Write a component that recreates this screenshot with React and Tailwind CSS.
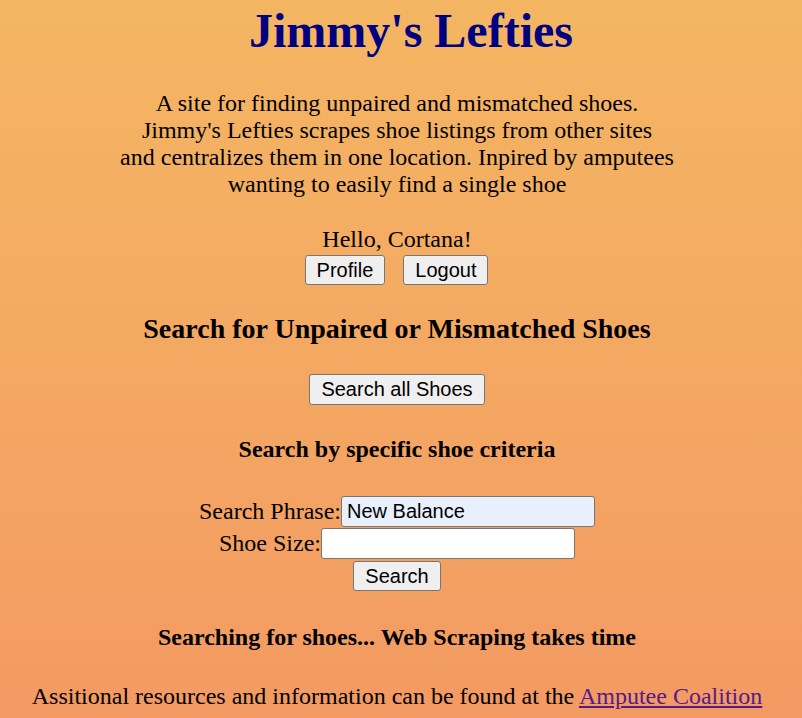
import React, { useState } from 'react';

const btn =
  "inline-flex items-center justify-center bg-[#efefef] border border-[#767676] rounded-[3px] font-['Liberation_Sans',Arial,sans-serif] text-[20px] leading-[23px] text-black px-[11px]";

const input =
  "w-[254px] h-[31px] border border-[#767676] rounded-[3px] px-[5px] font-['Liberation_Sans',Arial,sans-serif] text-[20px] text-black outline-none";

const App = () => {
  const [phrase, setPhrase] = useState('New Balance');
  const [size, setSize] = useState('');

  return (
    <div className="min-h-screen bg-gradient-to-b from-[#f4b662] to-[#f39a62] font-['Liberation_Serif','Times_New_Roman',serif] text-[24px] text-black">
      <div className="pr-[8px] text-center">
        {/* Header */}
        <h1 className="pt-[3px] pl-[28px] text-[48px] font-bold leading-[55px] text-[#000080]">
          Jimmy's Lefties
        </h1>

        <p className="mt-[32px] leading-[27px]">
          A site for finding unpaired and mismatched shoes.
          <br />
          Jimmy's Lefties scrapes shoe listings from other sites
          <br />
          and centralizes them in one location. Inpired by amputees
          <br />
          wanting to easily find a single shoe
        </p>

        {/* User */}
        <p className="mt-[28px] leading-[27px]">Hello, Cortana!</p>
        <div className="mt-[2px] flex justify-center gap-[18px] pr-[1px]">
          <button className={`${btn} h-[30px]`}>Profile</button>
          <button className={`${btn} h-[30px]`}>Logout</button>
        </div>

        {/* Search */}
        <h3 className="mt-[28px] text-[28px] font-bold leading-[32px]">
          Search for Unpaired or Mismatched Shoes
        </h3>
        <div className="mt-[29px] flex justify-center">
          <button className={`${btn} h-[31px]`}>Search all Shoes</button>
        </div>

        <h4 className="mt-[31px] font-bold leading-[27px]">Search by specific shoe criteria</h4>

        <div className="mt-[33px] flex flex-col items-center gap-[1px]">
          <label className="flex items-center leading-[27px]">
            Search Phrase:
            <input
              className={`${input} bg-[#e8f0fe]`}
              value={phrase}
              onChange={(e) => setPhrase(e.target.value)}
            />
          </label>
          <label className="flex items-center leading-[27px]">
            Shoe Size:
            <input
              className={`${input} bg-white`}
              value={size}
              onChange={(e) => setSize(e.target.value)}
            />
          </label>
          <button className={`${btn} mt-[1px] h-[30px]`}>Search</button>
        </div>

        <h4 className="mt-[33px] font-bold leading-[27px]">
          Searching for shoes... Web Scraping takes time
        </h4>

        {/* Footer */}
        <p className="mt-[32px] leading-[27px]">
          Assitional resources and information can be found at the{' '}
          <a href="#" className="text-[#551a8b] underline">
            Amputee Coalition
          </a>
        </p>
      </div>
    </div>
  );
};

export default App;
